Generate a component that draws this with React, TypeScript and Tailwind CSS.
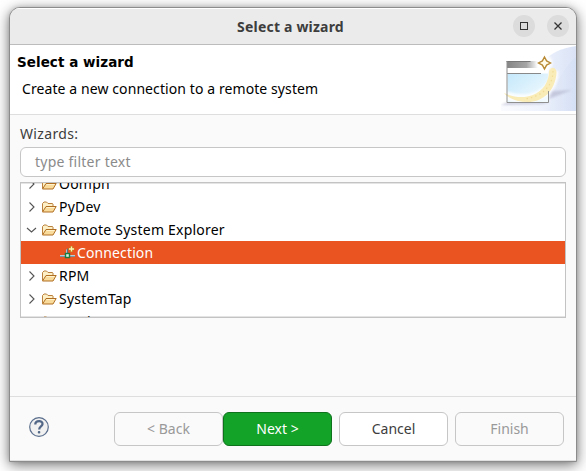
import React from "react";

function Folder() {
  return (
    <svg width="16" height="16" viewBox="0 0 16 16" className="shrink-0">
      <path d="M1.5 12.500V4.500l1.500-1.500h2.500l1.500 1.500h4.500l.5.500V7" fill="#fdf0c6" stroke="#b9813d" />
      <path d="M1.500 13 5 7.500h10.200L12 13z" fill="#f9dc9c" stroke="#b06e22" strokeLinejoin="round" />
      <path d="M5.500 8.500h8.100" stroke="#fff3cd" />
    </svg>
  );
}

function Arrow({ open }: { open?: boolean }) {
  return (
    <svg width="11" height="12" viewBox="0 0 11 12" fill="none" stroke="#555" strokeWidth="1.1" className="shrink-0">
      {open ? <path d="M1 4 5.500 8 10 4" /> : <path d="M3.500 1.500 8 6 3.500 10.500" />}
    </svg>
  );
}

function ConnectionIcon() {
  return (
    <svg width="17" height="16" viewBox="0 0 17 16" className="shrink-0">
      <path d="M0 10.500h15" stroke="#b9cdd8" />
      <path d="M0 11.500h15" stroke="#7d8f9b" />
      <path d="M6.500 9V4.500" stroke="#b9cdd8" />
      <path d="M7.500 9V3.500" stroke="#5e7180" strokeWidth="1.200" />
      <rect x="5.500" y="8.500" width="4" height="4" fill="#d5f5df" stroke="#1d7a43" strokeWidth="1.400" />
      <path d="M11.500 1v6M8.500 4h6" stroke="#b68a1b" strokeWidth="2.200" />
      <path d="M11.500 1.500v5M9 4h5" stroke="#fff6b4" strokeWidth="1.300" />
    </svg>
  );
}

function Row({ label, open }: { label: string; open?: boolean }) {
  return (
    <div className="flex h-[23px] shrink-0 items-center pl-[5px] tracking-[0.22px]">
      <Arrow open={open} />
      <span className="w-[4px]" />
      <Folder />
      <span className="ml-[2px] whitespace-pre text-black">{label}</span>
    </div>
  );
}

function WizardBanner() {
  return (
    <svg width="75" height="66" viewBox="501 45 75 66">
      <defs>
        <linearGradient id="sky" x1="0" y1="0" x2="1" y2="1">
          <stop offset="0" stopColor="#c4e8fb" />
          <stop offset="1" stopColor="#f6fcff" />
        </linearGradient>
        <linearGradient id="bar" x1="0" x2="1">
          <stop offset="0" stopColor="#858585" />
          <stop offset=".5" stopColor="#a5a5a5" />
          <stop offset=".8" stopColor="#fff" />
        </linearGradient>
        <linearGradient id="wash" x1="0" x2="1">
          <stop offset="0" stopColor="#fafbfe" />
          <stop offset=".5" stopColor="#eff3fc" />
          <stop offset="1" stopColor="#dae3f6" />
        </linearGradient>
        <linearGradient id="swoosh" x1="0" x2="1">
          <stop offset="0" stopColor="#e4ebf9" />
          <stop offset="1" stopColor="#d3def4" />
        </linearGradient>
        <filter id="soft"><feGaussianBlur stdDeviation="1.300" /></filter>
      </defs>
      <path d="M576 46C561 48 549 54 543 62L540 102 501 104v7h75z" fill="url(#wash)" />
      <path d="M576 57C565 66 556 80 549 111h27z" fill="url(#swoosh)" opacity=".55" />
      <path d="M549 99l23-9-20 1zM501 105l7-3h42l-8 2z" fill="#b2b3cc" opacity=".6" filter="url(#soft)" />
      <path d="M507 61.500h41.500v40.500H507z" fill="#fff" />
      <rect x="507" y="61" width="39" height="7" fill="url(#bar)" />
      <path d="M506.500 61.500h24" stroke="#777" />
      <rect x="507.500" y="73.500" width="40.500" height="28.500" fill="url(#sky)" />
      <path d="M507 73.500h34" stroke="#888" />
      <path d="M554 71C555 91 533 106 504 95" stroke="#fff" strokeWidth="9" fill="none" opacity=".85" filter="url(#soft)" />
      <path d="M549 71C550 66 557 67 556.500 73 555 92 542 102 528 102 518 102 509 99 504 93 514 98 525 98 533 95 543 91 549 82 549 71z" fill="#faecb7" />
      <path d="M553 71C553 86 542 97 524 99" stroke="#f0dd98" strokeWidth="1.300" strokeDasharray="1.500 3" fill="none" />
      <path d="M507 61v41.500h41.500V91" stroke="#8f8f8f" fill="none" />
      <circle cx="544.500" cy="63" r="8" fill="#fff" opacity=".85" filter="url(#soft)" />
      <path d="M544.500 57l2.100 3.900 3.900 2.100-3.900 2.100-2.100 3.900-2.100-3.900-3.900-2.100 3.900-2.100z" fill="#fffbe8" stroke="#b88a35" strokeWidth="1.400" />
    </svg>
  );
}

const button = "box-border flex h-[34px] w-[109px] items-center justify-center rounded-[6px] border";

export default function App() {
  return (
    <div className="flex h-[471px] w-[586px] overflow-hidden bg-white pl-[9px] pt-[7px] font-['Noto_Sans',sans-serif] text-[14px] text-[#3d3d3d]">
      <div className="flex h-[455px] w-[568px] flex-col overflow-hidden rounded-t-[11px] border border-[#8c8c8c] bg-[#fafafa] shadow-[0_3px_14px_rgba(0,0,0,0.55),0_0_4px_rgba(0,0,0,0.12)]">
        <div className="flex h-[37px] shrink-0 items-center border-b border-[#bcbcbc] bg-[#ebebeb] shadow-[inset_0_1px_0_#fff]">
          <span className="w-[60px] shrink-0" />
          <span className="flex-1 text-center font-bold tracking-[0.2px]"><span>Select a wizard</span></span>
          <div className="flex w-[65px] shrink-0 gap-[12px] pl-[2px]">
            <span className="flex size-[22px] shrink-0 items-center justify-center rounded-full bg-[#dcdcdc]">
              <span className="size-[8px] border border-[#333]" />
            </span>
            <span className="flex size-[22px] shrink-0 items-center justify-center rounded-full bg-[#dcdcdc]">
              <svg width="8" height="8" viewBox="0 0 8 8" stroke="#333" strokeWidth="1.300"><path d="M.5.5l7 7M7.500.5l-7 7" /></svg>
            </span>
          </div>
        </div>
        <div className="flex h-[70px] shrink-0 justify-between border-b border-[#dedede] bg-white text-black">
          <div className="flex flex-col pl-[7px]">
            <span className="mt-[7px] h-[20px] font-['DejaVu_Sans',sans-serif] text-[13.5px] leading-[20px] font-bold tracking-[0.05px]"><span>Select a wizard</span></span>
            <span className="mt-[7px] pl-[5px] leading-[20px] tracking-[0.09px]"><span>Create a new connection to a remote system</span></span>
          </div>
          <WizardBanner />
        </div>
        <div className="flex h-[282px] shrink-0 flex-col border-b border-[#dedede] px-[10px]">
          <span className="mt-[9px] h-[20px] leading-[20px] tracking-[0.35px]"><span>Wizards:</span></span>
          <div className="mt-[3px] flex h-[30px] shrink-0 items-center rounded-[6px] border border-[#c6c6c6] bg-white pb-[2px] pl-[14px] tracking-[0.24px] text-[#8b8b8b]"><span>type filter text</span></div>
          <div className="mt-[5px] h-[136px] shrink-0 overflow-hidden border border-[#c3c3c3] bg-white shadow-[inset_0_1px_0_#e4e4e4,inset_0_-1px_0_#e4e4e4]">
            <div className="-mt-[11px] flex flex-col">
              <Row label="Oomph" />
              <Row label="PyDev" />
              <Row label="Remote System Explorer" open />
              <div className="flex h-[23px] items-center bg-[#e95420] pl-[39px] tracking-[0.12px] text-white">
                <ConnectionIcon />
                <span>Connection</span>
              </div>
              <Row label="RPM" />
              <Row label="SystemTap" />
              <Row label="Tracing" />
            </div>
          </div>
        </div>
        <div className="flex flex-1 items-start pl-[19px] pt-[15px] shadow-[inset_0_-1px_0_#e0e0e0]">
          <svg width="20" height="20" viewBox="0 0 20 20" className="mt-[5px]">
            <circle cx="10" cy="10" r="9.300" fill="#f1f1f1" stroke="#596d8c" strokeWidth="1.200" />
            <path d="M6.300 7.500C6.300 3 14 3 13.500 7.200 13.200 9.500 10.200 9.500 10.200 12.500" fill="none" stroke="#536787" strokeWidth="2.300" />
            <rect x="8.800" y="14" width="2.500" height="2.500" rx="1" fill="#536787" />
          </svg>
          <div className="ml-[65px] flex leading-[20px]">
            <div className={`${button} border-[#c6c6c6] text-[#999]`}><span>&lt; Back</span></div>
            <div className={`${button} border-[#0e711c] bg-[#13a329] text-white`}><span>Next &gt;</span></div>
            <div className={`${button} ml-[7px] border-[#c6c6c6] bg-white`}><span>Cancel</span></div>
            <div className={`${button} ml-[7px] border-[#c6c6c6] text-[#999]`}><span>Finish</span></div>
          </div>
        </div>
      </div>
    </div>
  );
}
